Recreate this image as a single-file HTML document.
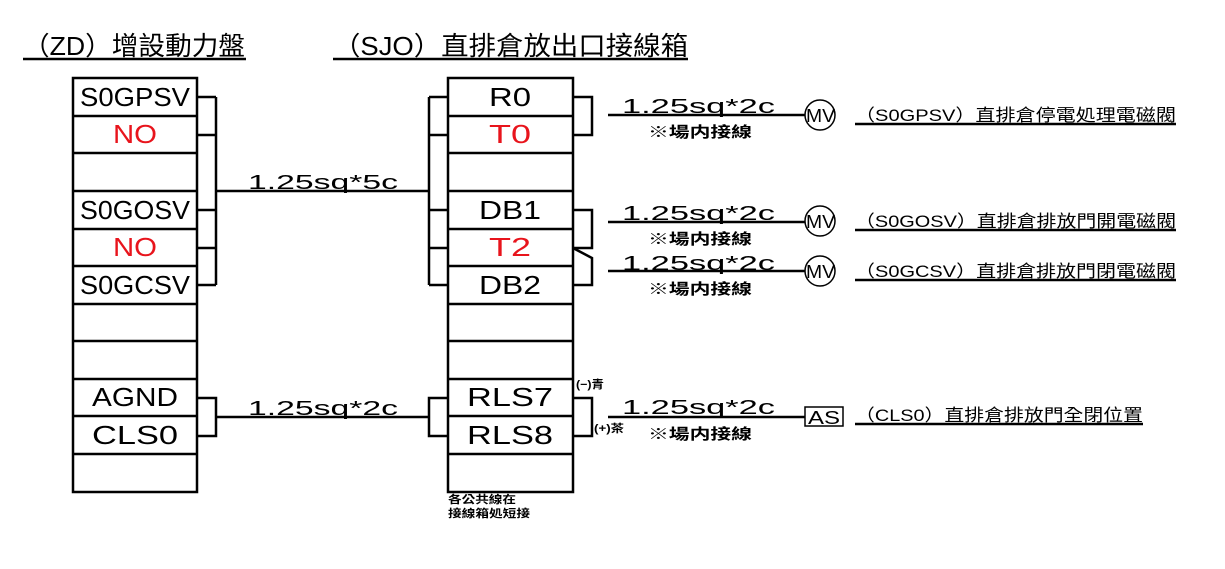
<!DOCTYPE html>
<html><head><meta charset="utf-8"><style>
html,body{margin:0;padding:0;background:#fff;}
svg{display:block;}
text{font-family:"Liberation Sans","Noto Sans CJK TC","WenQuanYi Zen Hei",sans-serif;}
</style></head><body>
<svg width="1225" height="569" viewBox="0 0 1225 569" xmlns="http://www.w3.org/2000/svg">
<g stroke="#000" stroke-width="2.5" fill="none">
<line x1="23" y1="59" x2="246" y2="59"/>
<line x1="333" y1="59" x2="688" y2="59"/>
<rect x="73" y="78" width="124" height="414"/>
<line x1="73" y1="116" x2="197" y2="116"/><line x1="73" y1="153" x2="197" y2="153"/>
<line x1="73" y1="191" x2="197" y2="191"/><line x1="73" y1="229" x2="197" y2="229"/>
<line x1="73" y1="266" x2="197" y2="266"/><line x1="73" y1="304" x2="197" y2="304"/>
<line x1="73" y1="341" x2="197" y2="341"/><line x1="73" y1="379" x2="197" y2="379"/>
<line x1="73" y1="416" x2="197" y2="416"/><line x1="73" y1="454" x2="197" y2="454"/>
<rect x="448" y="78" width="125" height="414"/>
<line x1="448" y1="116" x2="573" y2="116"/><line x1="448" y1="153" x2="573" y2="153"/>
<line x1="448" y1="191" x2="573" y2="191"/><line x1="448" y1="229" x2="573" y2="229"/>
<line x1="448" y1="266" x2="573" y2="266"/><line x1="448" y1="304" x2="573" y2="304"/>
<line x1="448" y1="341" x2="573" y2="341"/><line x1="448" y1="379" x2="573" y2="379"/>
<line x1="448" y1="416" x2="573" y2="416"/><line x1="448" y1="454" x2="573" y2="454"/>
<line x1="216" y1="97" x2="216" y2="285"/>
<line x1="197" y1="97" x2="216" y2="97"/><line x1="197" y1="135" x2="216" y2="135"/>
<line x1="197" y1="210" x2="216" y2="210"/><line x1="197" y1="248" x2="216" y2="248"/>
<line x1="197" y1="285" x2="216" y2="285"/>
<line x1="216" y1="191" x2="429" y2="191"/>
<line x1="429" y1="97" x2="429" y2="285"/>
<line x1="429" y1="97" x2="448" y2="97"/><line x1="429" y1="135" x2="448" y2="135"/>
<line x1="429" y1="210" x2="448" y2="210"/><line x1="429" y1="248" x2="448" y2="248"/>
<line x1="429" y1="285" x2="448" y2="285"/>
<polyline points="197,398 216,398 216,436 197,436"/>
<line x1="216" y1="417" x2="429" y2="417"/>
<polyline points="448,398 429,398 429,436 448,436"/>
<polyline points="573,97 592,97 592,135 573,135"/>
<polyline points="573,210 592,210 592,248 573,248"/>
<polyline points="573,248 592,258 592,285 573,285"/>
<polyline points="573,398 592,398 592,436 573,436"/>
<line x1="608" y1="115" x2="805" y2="115"/>
<line x1="608" y1="222" x2="805" y2="222"/>
<line x1="608" y1="271" x2="805" y2="271"/>
<line x1="608" y1="417" x2="805" y2="417"/>
<line x1="855" y1="124" x2="1176" y2="124"/>
<line x1="855" y1="230" x2="1176" y2="230"/>
<line x1="855" y1="280" x2="1176" y2="280"/>
<line x1="855" y1="424" x2="1143" y2="424"/>
</g>
<g stroke="#000" stroke-width="1.5" fill="none">
<circle cx="820" cy="115" r="15"/>
<circle cx="820" cy="221" r="15"/>
<circle cx="820" cy="271" r="15"/>
<rect x="805" y="407" width="38" height="19"/>
</g>
<g fill="#000" font-size="26">
<text x="23" y="55" font-size="26" textLength="222" lengthAdjust="spacingAndGlyphs">（ZD）增設動力盤</text>
<text x="333" y="55" font-size="26" textLength="355" lengthAdjust="spacingAndGlyphs">（SJO）直排倉放出口接線箱</text>
<text x="135" y="106" text-anchor="middle" textLength="110" lengthAdjust="spacingAndGlyphs">S0GPSV</text>
<text x="135" y="143" text-anchor="middle" fill="#e8141c" textLength="44" lengthAdjust="spacingAndGlyphs">NO</text>
<text x="135" y="219" text-anchor="middle" textLength="110" lengthAdjust="spacingAndGlyphs">S0GOSV</text>
<text x="135" y="256" text-anchor="middle" fill="#e8141c" textLength="44" lengthAdjust="spacingAndGlyphs">NO</text>
<text x="135" y="294" text-anchor="middle" textLength="110" lengthAdjust="spacingAndGlyphs">S0GCSV</text>
<text x="135" y="406" text-anchor="middle" textLength="86" lengthAdjust="spacingAndGlyphs">AGND</text>
<text x="135" y="444" text-anchor="middle" textLength="86" lengthAdjust="spacingAndGlyphs">CLS0</text>
<text x="510" y="106" text-anchor="middle" textLength="42" lengthAdjust="spacingAndGlyphs">R0</text>
<text x="510" y="143" text-anchor="middle" fill="#e8141c" textLength="42" lengthAdjust="spacingAndGlyphs">T0</text>
<text x="510" y="219" text-anchor="middle" textLength="62" lengthAdjust="spacingAndGlyphs">DB1</text>
<text x="510" y="256" text-anchor="middle" fill="#e8141c" textLength="42" lengthAdjust="spacingAndGlyphs">T2</text>
<text x="510" y="294" text-anchor="middle" textLength="62" lengthAdjust="spacingAndGlyphs">DB2</text>
<text x="510" y="406" text-anchor="middle" textLength="86" lengthAdjust="spacingAndGlyphs">RLS7</text>
<text x="510" y="444" text-anchor="middle" textLength="86" lengthAdjust="spacingAndGlyphs">RLS8</text>
</g>
<g fill="#000" font-size="20">
<text x="248" y="189" textLength="150" lengthAdjust="spacingAndGlyphs">1.25sq*5c</text>
<text x="248" y="415" textLength="150" lengthAdjust="spacingAndGlyphs">1.25sq*2c</text>
<text x="622" y="113" textLength="153" lengthAdjust="spacingAndGlyphs">1.25sq*2c</text>
<text x="622" y="220" textLength="153" lengthAdjust="spacingAndGlyphs">1.25sq*2c</text>
<text x="622" y="270" textLength="153" lengthAdjust="spacingAndGlyphs">1.25sq*2c</text>
<text x="622" y="414" textLength="153" lengthAdjust="spacingAndGlyphs">1.25sq*2c</text>
</g>
<g fill="#000" font-size="15" font-weight="bold">
<text x="648" y="137" textLength="104" lengthAdjust="spacingAndGlyphs">※場内接線</text>
<text x="648" y="244" textLength="104" lengthAdjust="spacingAndGlyphs">※場内接線</text>
<text x="648" y="294" textLength="104" lengthAdjust="spacingAndGlyphs">※場内接線</text>
<text x="648" y="439" textLength="104" lengthAdjust="spacingAndGlyphs">※場内接線</text>
</g>
<g fill="#000" font-size="17">
<text x="855" y="121" textLength="321" lengthAdjust="spacingAndGlyphs">（S0GPSV）直排倉停電処理電磁閥</text>
<text x="855" y="227" textLength="321" lengthAdjust="spacingAndGlyphs">（S0GOSV）直排倉排放門開電磁閥</text>
<text x="855" y="277" textLength="321" lengthAdjust="spacingAndGlyphs">（S0GCSV）直排倉排放門閉電磁閥</text>
<text x="855" y="421" textLength="288" lengthAdjust="spacingAndGlyphs">（CLS0）直排倉排放門全閉位置</text>
</g>
<g fill="#000" font-size="18">
<text x="806" y="122" textLength="29" lengthAdjust="spacingAndGlyphs">MV</text>
<text x="806" y="228" textLength="29" lengthAdjust="spacingAndGlyphs">MV</text>
<text x="806" y="278" textLength="29" lengthAdjust="spacingAndGlyphs">MV</text>
<text x="808" y="424" textLength="32" lengthAdjust="spacingAndGlyphs">AS</text>
</g>
<g fill="#000" font-size="11" font-weight="bold">
<text x="576" y="388" textLength="28" lengthAdjust="spacingAndGlyphs">(−)青</text>
<text x="594" y="432" textLength="30" lengthAdjust="spacingAndGlyphs">(+)茶</text>
<text x="448" y="503" textLength="68" lengthAdjust="spacingAndGlyphs">各公共線在</text>
<text x="448" y="517" textLength="82" lengthAdjust="spacingAndGlyphs">接線箱処短接</text>
</g>
</svg>
</body></html>
